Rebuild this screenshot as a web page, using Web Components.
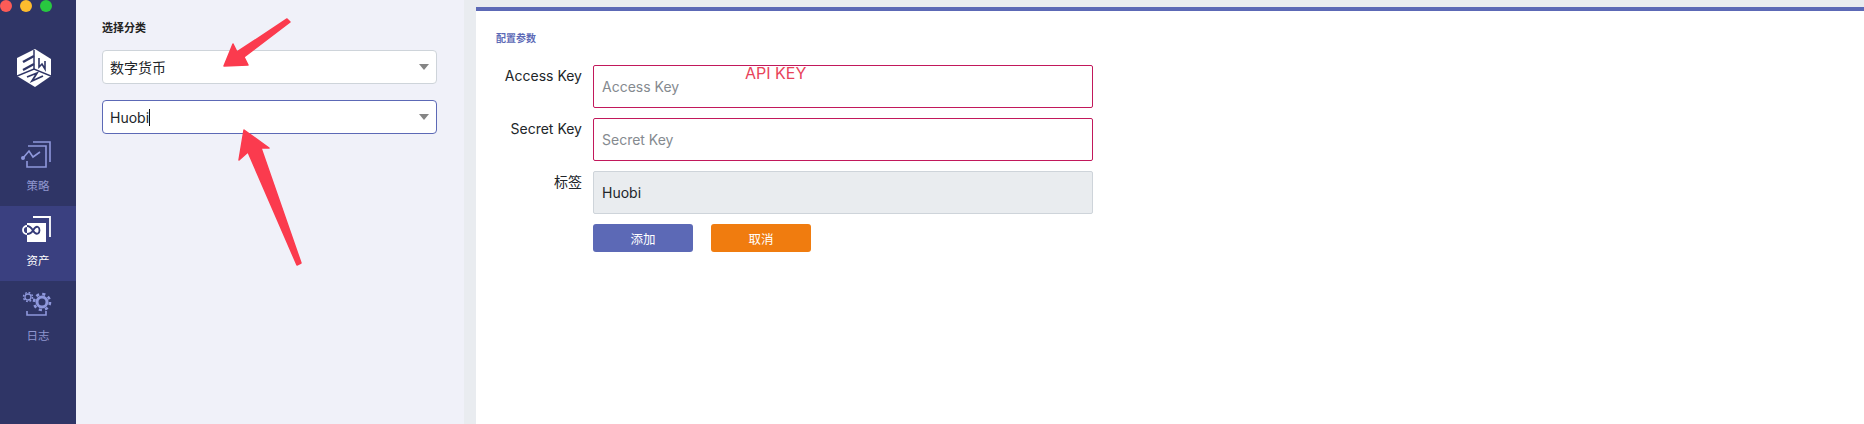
<!DOCTYPE html>
<html lang="zh">
<head>
<meta charset="utf-8">
<title>配置参数</title>
<style>
  html, body { margin: 0; height: 100%; }
  body { font-family: Inter, "Noto Sans CJK SC", sans-serif; }
</style>
</head>
<body>
<app-shell>
  <nav-rail slot="rail">
    <rail-item>
      <svg slot="icon" viewBox="0 0 40 30" fill="none" stroke="#8f98dc" stroke-width="1.6">
        <path d="M15 3H32V23"/>
        <path d="M10 7H28V28H9V22"/>
        <path d="M5 19L11 12L15 18L22 13"/>
        <circle cx="5" cy="19" r="1.2" fill="#8f98dc"/>
      </svg>
      策略
    </rail-item>
    <rail-item active>
      <svg slot="icon" viewBox="0 0 40 30" fill="none" stroke-width="1.8">
        <path d="M15 3H32V23" stroke="#fff"/>
        <rect x="9" y="9" width="19" height="19" fill="#fff"/>
        <path d="M9 12C12 12 13.500 14 15 16.500C16.500 19 18 20.500 20 19.500C22 18.500 22 14 20 13C18 12 16.500 14 15 16.500C13.500 19 12 20 9 20" stroke="#343a78"/>
        <path d="M9 12A4 4 0 0 0 9 20" stroke="#fff"/>
      </svg>
      资产
    </rail-item>
    <rail-item>
      <svg slot="icon" viewBox="0 0 40 30" fill="none" stroke="#8f98dc">
        <circle cx="24" cy="13" r="5" stroke-width="3"/>
        <circle cx="24" cy="13" r="8" stroke-width="2.600" stroke-dasharray="3.140 3.140"/>
        <circle cx="10" cy="8" r="3" stroke-width="1.300"/>
        <circle cx="10" cy="8" r="4.500" stroke-width="1.500" stroke-dasharray="1.770 1.770"/>
        <path d="M9 22V26H28V22" stroke-width="1.600"/>
      </svg>
      日志
    </rail-item>
  </nav-rail>

  <category-panel slot="panel" heading="选择分类">
    <select-box>数字货币</select-box>
    <select-box focused>Huobi</select-box>
  </category-panel>

  <config-card slot="main" heading="配置参数">
    <form-row label="Access Key"><text-field invalid placeholder="Access Key"></text-field></form-row>
    <form-row label="Secret Key"><text-field invalid placeholder="Secret Key"></text-field></form-row>
    <form-row label="标签"><text-field disabled value="Huobi"></text-field></form-row>
    <div slot="actions" style="display:flex;gap:18px">
      <action-button>添加</action-button>
      <action-button tone="cancel">取消</action-button>
    </div>
    <span slot="note">API KEY</span>
  </config-card>

  <arrow-marks slot="marks"></arrow-marks>
</app-shell>

<script>
// Cada clase guarda su markup y estilos en su propio shadow root
function define(tag, html, extra) {
  const klass = class extends HTMLElement {
    constructor() {
      super();
      this.attachShadow({ mode: "open" });
    }
    connectedCallback() {
      this.shadowRoot.innerHTML = html(this);
      if (extra) extra(this);
    }
  };
  customElements.define(tag, klass);
}

define("app-shell", () => `
  <style>
    :host { display: flex; position: relative; height: 424px; overflow: hidden; background: #e9ecf0; }
    .gutter { flex: 1; padding: 7px 0 0 12px; display: flex; min-width: 0; }
  </style>
  <slot name="rail"></slot>
  <slot name="panel"></slot>
  <div class="gutter"><slot name="main"></slot></div>
  <slot name="marks"></slot>
`);

define("nav-rail", () => `
  <style>
    :host { display: block; width: 76px; flex: none; background: #2f3566; }
    .lights { display: flex; gap: 8px; padding-left: 0; height: 12px; }
    .lights i { width: 12px; height: 12px; border-radius: 50%; }
    .logo { display: block; width: 34px; height: 38px; margin: 37px 0 44px 17px; }
  </style>
  <div class="lights">
    <i style="background:#fc5b57"></i><i style="background:#fdbc2e"></i><i style="background:#28c840"></i>
  </div>
  <svg class="logo" viewBox="0 0 34 38">
    <path d="M18 0L34 10V27L18 38L0 27V9Z" fill="#fff"/>
    <g fill="none" stroke="#2f3566">
      <path d="M0 27L17 20L34 27" stroke-width="1.500"/>
      <path d="M17 1V20" stroke-width="1.500"/>
      <path d="M6 13L17 7" stroke-width="2.500"/>
      <path d="M6 21L17 15" stroke-width="2.200"/>
      <path d="M22 9V18L25 15L28 20V12" stroke-width="1.600"/>
      <path d="M10 28L20 24L15 32L26 27" stroke-width="1.800"/>
    </g>
  </svg>
  <slot></slot>
`);

define("rail-item", (el) => `
  <style>
    :host { display: block; height: 75px; box-sizing: border-box; padding-top: 8px; text-align: center;
      font-size: 11.500px; line-height: 16px; color: ${el.hasAttribute("active") ? "#fff" : "#8f96cf"};
      background: ${el.hasAttribute("active") ? "#3a4080" : "transparent"}; }
    ::slotted(svg) { display: block; width: 40px; height: 30px; margin: 0 auto 9px; }
  </style>
  <slot name="icon"></slot>
  <slot></slot>
`);

define("category-panel", (el) => `
  <style>
    :host { display: block; width: 388px; flex: none; box-sizing: border-box; padding: 21px 27px 0 26px; background: #f0f1f9; }
    h2 { margin: 0 0 15px; font-size: 11px; line-height: 14px; font-weight: 700; color: #222; }
    .stack { display: grid; gap: 16px; }
  </style>
  <h2>${el.getAttribute("heading")}</h2>
  <div class="stack"><slot></slot></div>
`);

define("select-box", (el) => `
  <style>
    :host { display: flex; align-items: center; height: 34px; box-sizing: border-box; padding: 0 7px;
      background: #fff; border: 1px solid ${el.hasAttribute("focused") ? "#5c69b6" : "#ced4da"}; border-radius: 4px;
      font-size: 14px; color: #212529; }
    .value { flex: 1; }
    .caret { display: ${el.hasAttribute("focused") ? "inline-block" : "none"}; width: 1px; height: 17px; background: #111; vertical-align: -3px; }
    .arrow { width: 0; height: 0; margin-right: 0; border: 5px solid transparent; border-top: 6px solid #858585; border-bottom: 0; }
  </style>
  <span class="value"><slot></slot><i class="caret"></i></span>
  <span class="arrow"></span>
`);

define("config-card", (el) => `
  <style>
    :host { display: block; position: relative; flex: 1; box-sizing: border-box; padding: 20px 20px 0; background: #fff; border-top: 4px solid #5c69b6; }
    h2 { margin: 0 0 20px; font-size: 10px; line-height: 14px; font-weight: 700; color: #5c69b6; }
    .rows { display: grid; gap: 10px; }
    .actions { margin: 10px 0 0 97px; }
    .note { position: absolute; left: 269px; top: 50px; font-size: 16px; line-height: 24px; color: #e8435a; }
  </style>
  <h2>${el.getAttribute("heading")}</h2>
  <div class="rows"><slot></slot></div>
  <div class="actions"><slot name="actions"></slot></div>
  <div class="note"><slot name="note"></slot></div>
`);

define("form-row", (el) => `
  <style>
    :host { display: grid; grid-template-columns: 86px 500px; column-gap: 11px; }
    label { padding-top: 1px; text-align: right; font-size: 14px; line-height: 20px; color: #212529; }
  </style>
  <label>${el.getAttribute("label")}</label>
  <slot></slot>
`);

define("text-field", (el) => {
  const disabled = el.hasAttribute("disabled");
  const border = disabled ? "#ced4da" : "#c2185b";
  const text = el.getAttribute("value") || el.getAttribute("placeholder");
  return `
  <style>
    :host { display: flex; align-items: center; height: 43px; box-sizing: border-box; padding: 0 8px;
      background: ${disabled ? "#e9ecef" : "#fff"}; border: 1px solid ${border}; border-radius: 2px;
      font-size: 14px; color: ${disabled ? "#212529" : "#858a8f"}; }
  </style>
  <span>${text}</span>`;
});

define("action-button", (el) => `
  <style>
    :host { display: flex; align-items: center; justify-content: center; width: 100px; height: 28px; border-radius: 3px;
      background: ${el.getAttribute("tone") === "cancel" ? "#f07c0f" : "#5c69b6"}; color: #fff; font-size: 12.500px; }
  </style>
  <slot></slot>
`);

// Flechas rojas de anotación, encima de todo
define("arrow-marks", () => `
  <style>
    :host { position: absolute; inset: 0; pointer-events: none; }
    svg { display: block; width: 100%; height: 100%; }
  </style>
  <svg viewBox="0 0 1864 424" fill="#fb3b4e" stroke="#fb3b4e" stroke-width="1.500" stroke-linejoin="round">
    <polygon points="224,66 233,44 237,52 287,19 290,22 244,57 248,65"/>
    <polygon points="244,130 269,148 261,148 301,263 297,265 248,152 239,160"/>
  </svg>
`);
</script>
</body>
</html>
